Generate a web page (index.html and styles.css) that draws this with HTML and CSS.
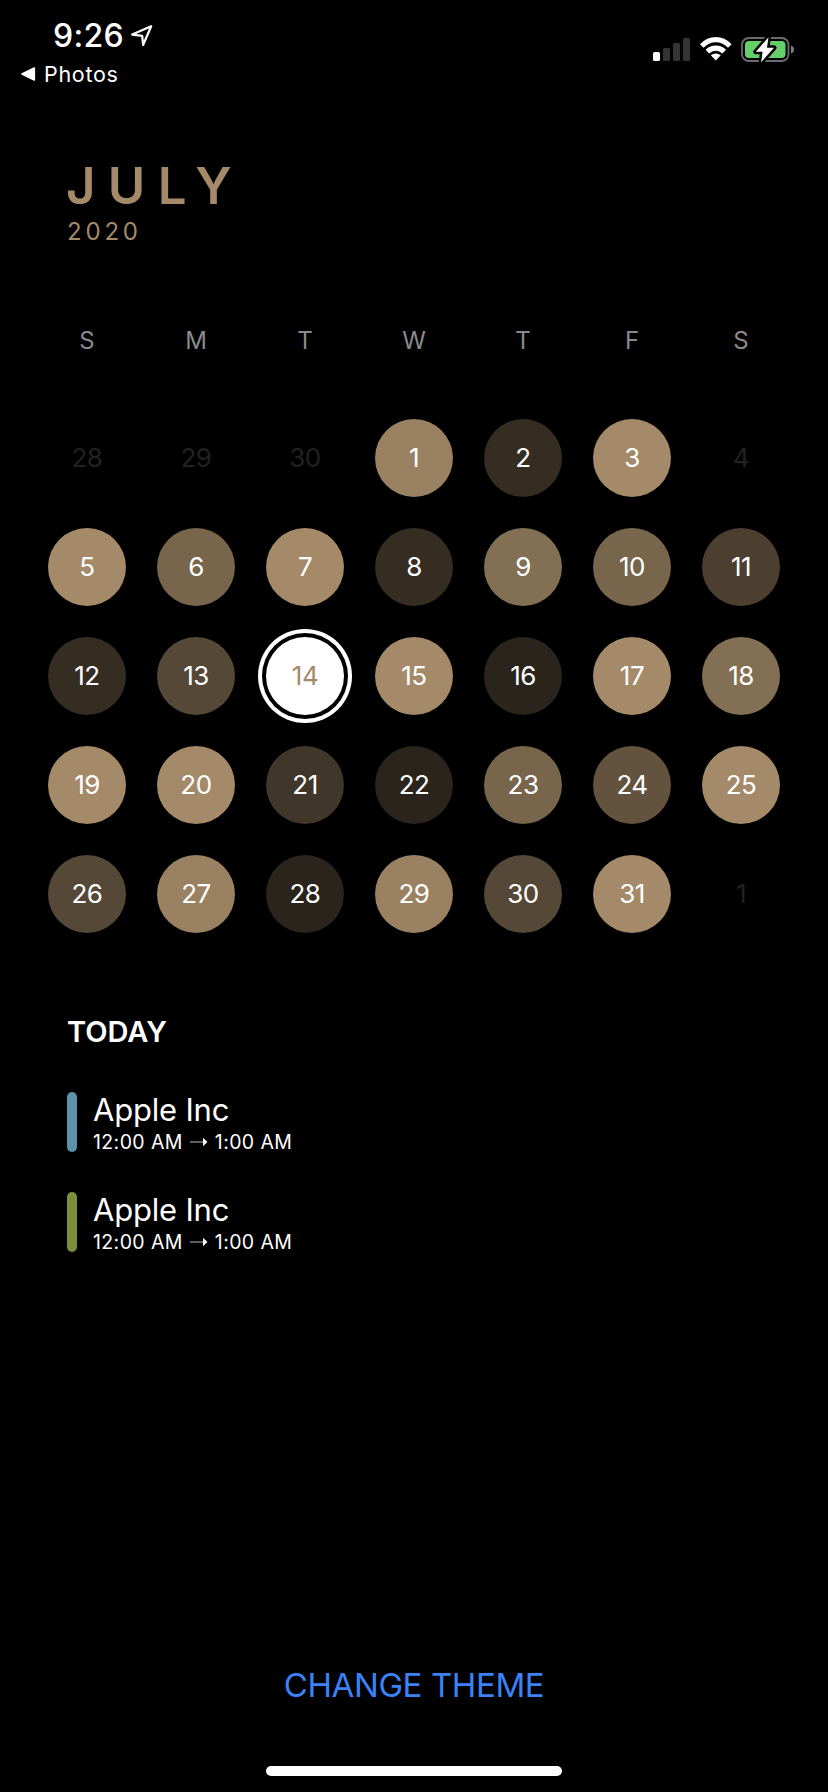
FILE: index.html
```html
<!DOCTYPE html>
<html lang="en">
<head>
<meta charset="utf-8">
<title>July 2020</title>
<link rel="stylesheet" href="styles.css">
</head>
<body>
<div class="screen">
  <header class="status">
    <div class="status-left">
      <div class="clock"><span class="clock-time">9:26</span>
        <svg class="location" width="24" height="24" viewBox="0 0 24 24"><path d="M21.2 2.3 2.2 10.6 12.2 11.8 13.1 21Z" fill="none" stroke="#fff" stroke-width="2.2" stroke-linejoin="round"/></svg>
      </div>
      <div class="back">
        <svg width="15" height="14" viewBox="0 0 15 14"><path d="M1 7 13.3 1V13Z" fill="#fff" stroke="#fff" stroke-width="1.6" stroke-linejoin="round"/></svg>
        <span class="back-label">Photos</span>
      </div>
    </div>
    <div class="status-right">
      <svg width="38" height="24" viewBox="0 0 38 24"><rect x="0" y="14" width="7" height="9" rx="1.6" fill="#fff"/><g fill="#343434"><rect x="10" y="10" width="7" height="13" rx="1.6"/><rect x="20" y="5" width="7" height="18" rx="1.6"/><rect x="30" y="0" width="7" height="23" rx="1.6"/></g></svg>
      <svg width="32" height="24" viewBox="0 0 32 24"><path d="M0 7.2Q6.8 0 15.8 0T31.6 7.2L28 10.8Q23.2 5.2 15.8 5.2T3.6 10.8Z" fill="#fff"/><path d="M5.6 12.7Q10 8.5 15.8 8.5T26 12.7L22.4 16.4Q19.8 13.7 15.8 13.7T9.2 16.4Z" fill="#fff"/><path d="M10.8 18.2Q13 16.5 15.8 16.5T20.8 18.2L15.8 23.5Z" fill="#fff"/></svg>
      <svg width="54" height="28" viewBox="0 0 54 28"><rect x="1" y="2" width="46.5" height="23" rx="6.8" fill="none" stroke="#6c6c6c" stroke-width="1.8"/><rect x="4" y="5" width="40.5" height="17" rx="4" fill="#65cf69"/><path d="M50 9.5Q53 10.5 53 13.5T50 17.5Z" fill="#7d7d7d"/><path d="M27.5 1.2 14.8 15.8H21.6L20.1 26.3 33 11.8H26Z" fill="#fff" stroke="#000" stroke-width="5" stroke-linejoin="round" paint-order="stroke"/></svg>
    </div>
  </header>

  <div class="heading">
    <h1 class="month">JULY</h1>
    <div class="year">2020</div>
  </div>

  <div class="weekdays"><span>S</span><span>M</span><span>T</span><span>W</span><span>T</span><span>F</span><span>S</span></div>

  <div class="days">
    <span class="day outside">28</span><span class="day outside">29</span><span class="day outside">30</span><span class="day t9">1</span><span class="day t2">2</span><span class="day t10">3</span><span class="day outside">4</span>
    <span class="day t10">5</span><span class="day t7">6</span><span class="day t10">7</span><span class="day t2">8</span><span class="day t8">9</span><span class="day t7">10</span><span class="day t4">11</span>
    <span class="day t2">12</span><span class="day t5">13</span><span class="day today">14</span><span class="day t10">15</span><span class="day t1">16</span><span class="day t10">17</span><span class="day t8">18</span>
    <span class="day t10">19</span><span class="day t10">20</span><span class="day t3">21</span><span class="day t1">22</span><span class="day t7">23</span><span class="day t6">24</span><span class="day t10">25</span>
    <span class="day t5">26</span><span class="day t9">27</span><span class="day t1">28</span><span class="day t9">29</span><span class="day t5">30</span><span class="day t10">31</span><span class="day outside">1</span>
  </div>

  <section class="agenda">
    <h2 class="agenda-title">TODAY</h2>
    <article class="event">
      <span class="bar blue"></span>
      <div class="event-text">
        <div class="event-name">Apple Inc</div>
        <div class="event-time"><span>12:00 AM</span><svg width="18" height="10" viewBox="0 0 18 10"><path d="M0 5H14" stroke="#bbb" stroke-width="1"/><path d="M13 .8 17.5 5 13 9.2Z" fill="#fff"/></svg><span>1:00 AM</span></div>
      </div>
    </article>
    <article class="event">
      <span class="bar green"></span>
      <div class="event-text">
        <div class="event-name">Apple Inc</div>
        <div class="event-time"><span>12:00 AM</span><svg width="18" height="10" viewBox="0 0 18 10"><path d="M0 5H14" stroke="#bbb" stroke-width="1"/><path d="M13 .8 17.5 5 13 9.2Z" fill="#fff"/></svg><span>1:00 AM</span></div>
      </div>
    </article>
  </section>

  <footer class="footer">
    <button class="theme">CHANGE THEME</button>
    <div class="home"></div>
  </footer>
</div>
</body>
</html>
```
FILE: styles.css
```css
* { box-sizing: border-box; }
body { margin: 0; background: #000; color: #fff; font-family: Inter, "Liberation Sans", sans-serif; }
svg { display: block; flex: none; }
.screen { width: 828px; height: 1792px; display: flex; flex-direction: column; background: #000; overflow: hidden; }

.status { height: 155px; flex: none; display: flex; justify-content: space-between; }
.status-left { padding-top: 15px; }
.clock { display: flex; align-items: center; height: 41px; padding-left: 53px; }
.clock-time { width: 77px; font-size: 32px; line-height: 42px; font-weight: 500; letter-spacing: 0.3px; white-space: nowrap; }
.back { display: flex; align-items: center; gap: 8px; height: 36px; padding-left: 21px; }
.back-label { font-size: 21.5px; line-height: 36px; letter-spacing: 0.7px; }
.status-right { display: flex; align-items: flex-start; padding: 38px 33px 0 0; }
.status-right svg:nth-child(2) { margin: -1px 9px 0 9px; }
.status-right svg:nth-child(3) { margin-top: -2px; }

.heading { padding-left: 67px; }
.month { margin: 0 0 0 -1px; font-size: 51px; line-height: 61px; font-weight: 600; letter-spacing: 12.3px; color: #a48a69; }
.year { font-size: 24px; line-height: 31px; letter-spacing: 3.8px; color: #a48a69; }

.weekdays, .days { display: grid; grid-template-columns: repeat(7, 78px); column-gap: 31px; margin-left: 48px; text-align: center; }
.weekdays { margin-top: 73px; font-size: 24px; line-height: 41px; color: #8a8a8e; }
.days { margin-top: 58px; row-gap: 31px; }
.day { height: 78px; border-radius: 50%; font-size: 26px; line-height: 78px; letter-spacing: -0.5px; }
.outside { color: #222; }
.today { background: #fff; color: #a48a69; box-shadow: 0 0 0 4px #000, 0 0 0 8px #fff; }
.t1 { background: #2b241c; }
.t2 { background: #352c22; }
.t3 { background: #403629; }
.t4 { background: #4c3f30; }
.t5 { background: #564837; }
.t6 { background: #62523e; }
.t7 { background: #77654c; }
.t8 { background: #837054; }
.t9 { background: #998162; }
.t10 { background: #a48a69; }

.agenda { padding: 78px 0 0 67px; }
.agenda-title { margin: 0 0 40px; font-size: 29px; line-height: 41px; font-weight: 600; letter-spacing: 0; }
.event { display: flex; gap: 16px; height: 60px; margin-bottom: 40px; }
.bar { width: 10px; height: 60px; border-radius: 5px; }
.blue { background: #5c92ae; }
.green { background: #7b903b; }
.event-name { font-size: 31px; line-height: 36px; letter-spacing: -0.2px; }
.event-time { display: flex; align-items: center; gap: 7px; font-size: 19.5px; line-height: 28px; letter-spacing: 0.4px; white-space: nowrap; }

.footer { margin-top: auto; padding-bottom: 16px; display: flex; flex-direction: column; align-items: center; }
.theme { padding: 0; border: 0; background: none; color: #3b82f7; font: 400 33px/60px Inter, "Liberation Sans", sans-serif; letter-spacing: -0.4px; }
.home { width: 296px; height: 10px; margin-top: 51px; border-radius: 5px; background: #fff; }
```
